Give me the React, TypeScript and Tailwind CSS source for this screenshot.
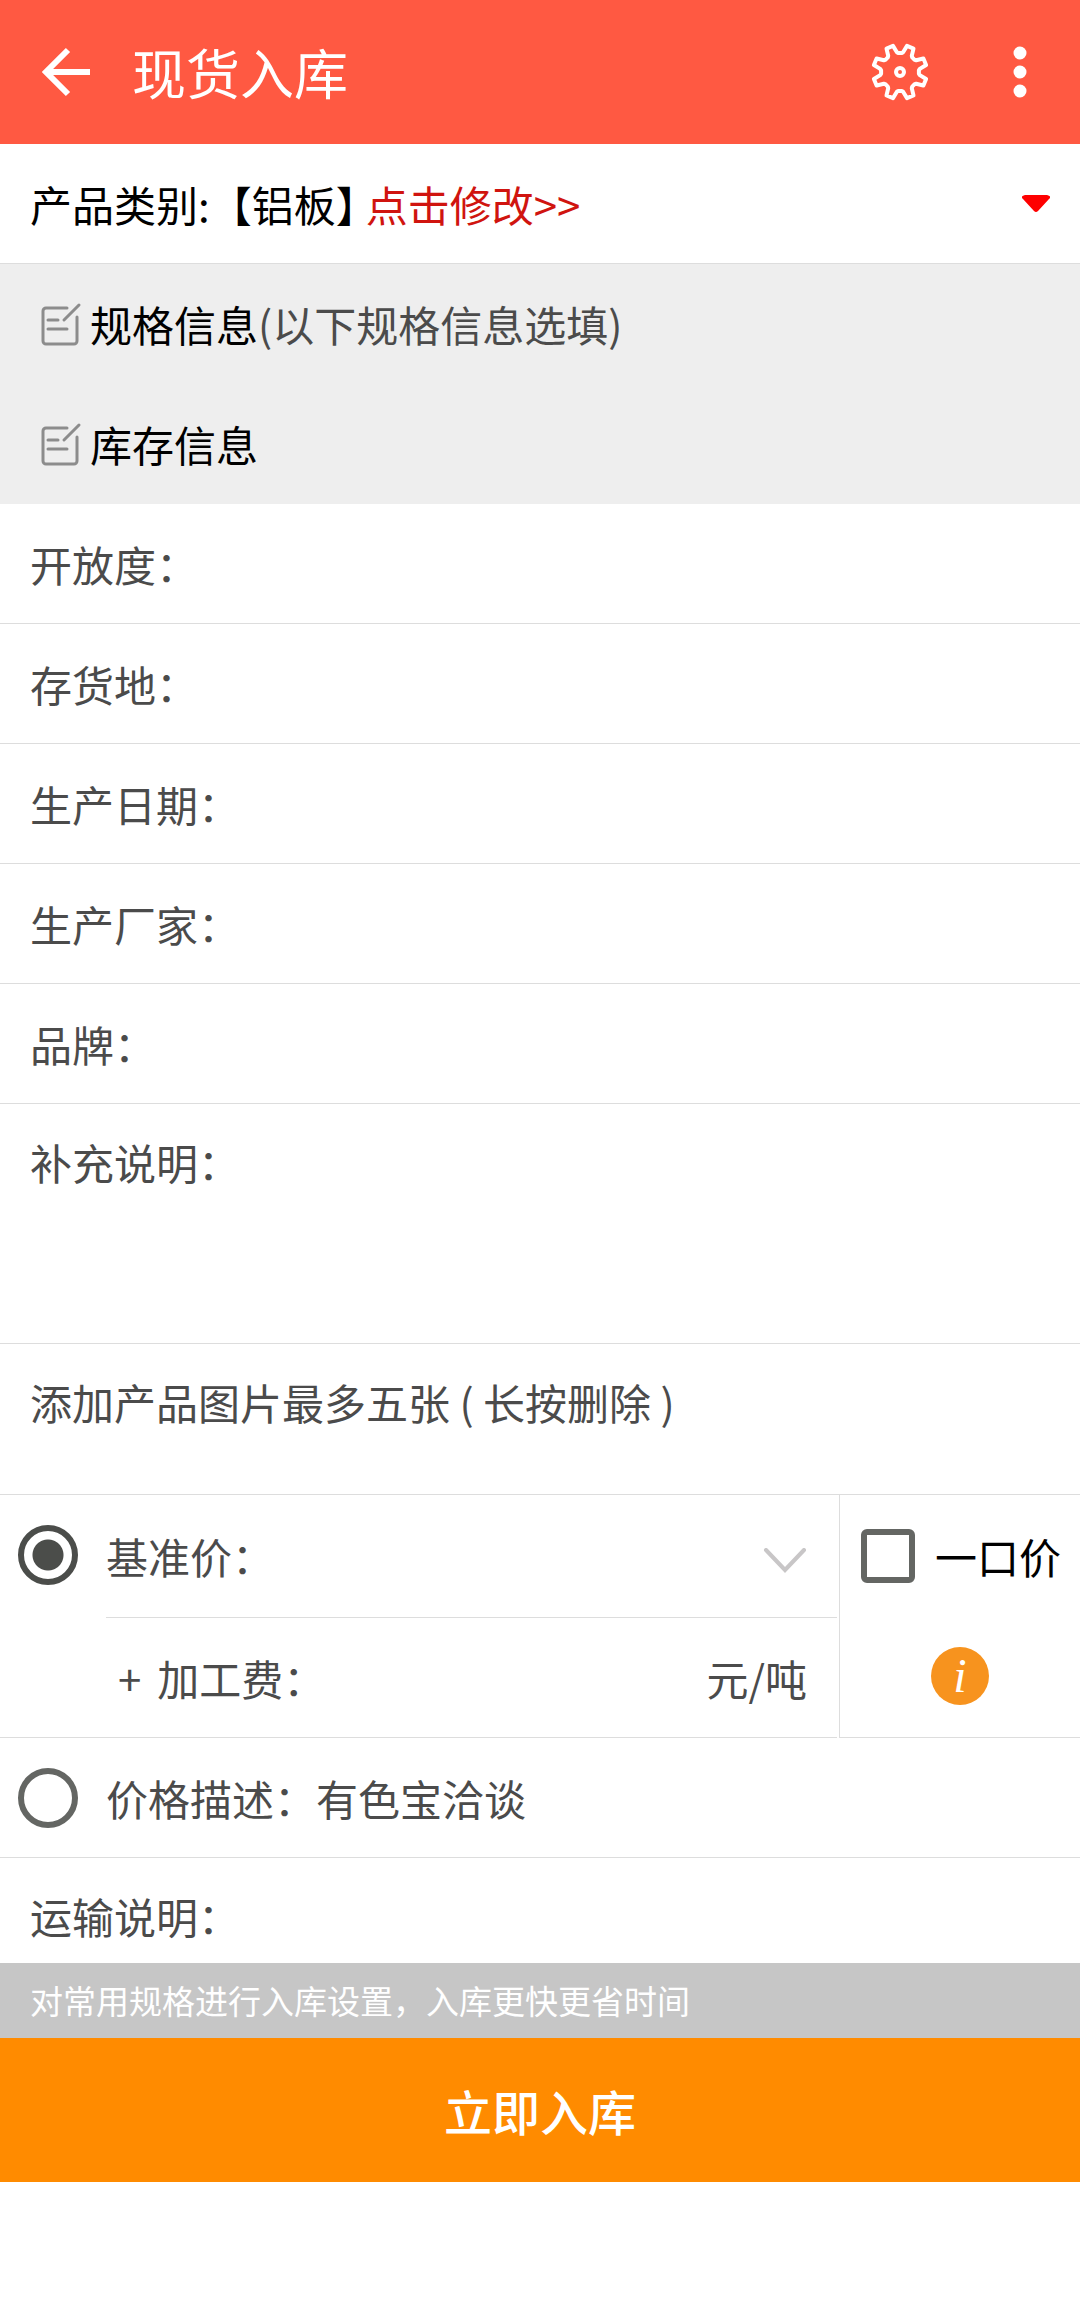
import { ReactNode, useState } from "react"

const fields = [
  { id: "openness", label: "开放度：" },
  { id: "location", label: "存货地：" },
  { id: "produceDate", label: "生产日期：" },
  { id: "manufacturer", label: "生产厂家：" },
  { id: "brand", label: "品牌：" },
]

// eight teeth, one every 45 degrees
const toothAngles = [0, 45, 90, 135, 180, 225, 270, 315]

const gearPath = () => {
  const points = toothAngles.flatMap(angle => {
    const tooth = [
      { r: 27, a: angle + 15 },
      { r: 27, a: angle + 30 },
      { r: 20, a: angle + 36 },
      { r: 19, a: angle + 40 },
      { r: 19, a: angle + 50 },
      { r: 20, a: angle + 54 },
    ]
    return tooth.map(({ r, a }) => {
      const rad = (a * Math.PI) / 180
      return `${(30 + r * Math.cos(rad)).toFixed(1)} ${(30 + r * Math.sin(rad)).toFixed(1)}`
    })
  })
  return `M${points.join("L")}Z`
}

const GearIcon = () => (
  <svg width="60" height="60" viewBox="0 0 60 60" fill="none" stroke="#fff" strokeWidth="4" strokeLinejoin="round">
    <path d={gearPath()} />
    <circle cx="30" cy="30" r="4" />
  </svg>
)

const EditIcon = () => (
  <svg width="42" height="44" viewBox="0 0 42 44" fill="none" stroke="#8c8c8c" strokeWidth="3" strokeLinecap="round">
    <path d="M27 6H6a3 3 0 0 0-3 3v30a3 3 0 0 0 3 3h28a3 3 0 0 0 3-3V15" />
    <path d="M24 18L39 3M8 18h10M8 27h19" />
  </svg>
)

const SectionTitle = ({ title, hint }: { title: string; hint?: string }) => (
  <div className="h-[120px] flex items-center gap-2 px-10">
    <EditIcon />
    <h2 className="text-black">
      {title}
      {hint && <span className="text-[#4b4b4b]">{hint}</span>}
    </h2>
  </div>
)

const Row = ({ id, label, children }: { id: string; label: string; children?: ReactNode }) => (
  <div className="h-[120px] flex items-center px-[30px] border-b border-[#dddddd]">
    <label htmlFor={id} className="shrink-0">{label}</label>
    {children ?? <input id={id} className="flex-1 min-w-0 outline-none" />}
  </div>
)

const radioStyle =
  "appearance-none shrink-0 size-[60px] rounded-full border-6 border-[#646663] checked:border-[#4b4d4a] checked:bg-[radial-gradient(circle,#4b4d4a_15px,transparent_16px)]"

const App = () => {
  const [priceType, setPriceType] = useState("base")
  const [description, setDescription] = useState("有色宝洽谈")

  return (
    <div className="min-h-screen bg-white text-[42px] leading-[60px] text-[#4b4b4b] font-['Noto_Sans_CJK_SC',sans-serif]">
      <header className="h-36 flex items-center bg-[#ff5942] text-white pl-9 pr-[30px]">
        <button aria-label="返回">
          <svg width="60" height="60" viewBox="0 0 60 60" fill="none" stroke="#fff" strokeWidth="6">
            <path d="M54 30H10M32 8L10 30l22 22" />
          </svg>
        </button>
        <h1 className="flex-1 pl-9 text-[54px] leading-[72px]">现货入库</h1>
        <button aria-label="设置" className="mr-15">
          <GearIcon />
        </button>
        <button aria-label="更多">
          <svg width="60" height="60" viewBox="0 0 60 60" fill="#fff">
            <circle cx="30" cy="11" r="6.5" />
            <circle cx="30" cy="30" r="6.5" />
            <circle cx="30" cy="49" r="6.5" />
          </svg>
        </button>
      </header>

      <main>
        <div className="h-[120px] flex items-center px-[30px] border-b border-[#dddddd] text-black">
          <span>产品类别:【铝板】</span>
          <a href="#category" className="-ml-3 text-[#d0140f]">点击修改&gt;&gt;</a>
          <svg className="ml-auto" width="28" height="18" viewBox="0 0 28 18" fill="#fe0000">
            <path d="M3 0h22q5 1 2 4L16 16q-2 2-4 0L1 4q-3-3 2-4z" />
          </svg>
        </div>

        <div className="bg-[#eeeeee]">
          <SectionTitle title="规格信息" hint="(以下规格信息选填)" />
          <SectionTitle title="库存信息" />
        </div>

        {fields.map(field => (
          <Row key={field.id} id={field.id} label={field.label} />
        ))}

        <div className="h-60 flex items-start px-[30px] py-7 border-b border-[#dddddd]">
          <label htmlFor="remark" className="shrink-0">补充说明：</label>
          <textarea id="remark" className="flex-1 h-full resize-none outline-none" />
        </div>

        <div className="h-[151px] px-[30px] pt-7 border-b border-[#dddddd]">添加产品图片最多五张 ( 长按删除 )</div>

        <div className="flex">
          <div className="flex-1 flex pl-[18px] border-b border-[#dddddd]">
            <input
              type="radio"
              id="basePrice"
              name="priceType"
              className={`${radioStyle} mt-[30px]`}
              checked={priceType === "base"}
              onChange={() => setPriceType("base")}
            />
            <div className="flex-1 ml-7">
              <div className="h-[123px] flex items-center justify-between pr-[30px] border-b border-[#dddddd]">
                <label htmlFor="basePrice">基准价：</label>
                <button aria-label="选择基准价" className="pt-2">
                  <svg width="44" height="25" viewBox="0 0 44 25" fill="none" stroke="#c8c6c7" strokeWidth="4" strokeLinecap="round">
                    <path d="M3 2l19 20L41 2" />
                  </svg>
                </button>
              </div>
              <div className="h-[119px] flex items-center pl-3 pr-[30px]">
                <label htmlFor="fee" className="shrink-0 flex gap-4">
                  <span>+</span>
                  <span>加工费：</span>
                </label>
                <input id="fee" className="flex-1 min-w-0 outline-none" />
                <span>元/吨</span>
              </div>
            </div>
          </div>
          <div className="w-[241px] ml-[2px] border-l border-b border-[#dddddd]">
            <div className="h-[121px] flex items-center pl-[21px] gap-5 text-black">
              <input
                type="checkbox"
                id="fixedPrice"
                className="appearance-none shrink-0 size-[54px] rounded-md border-6 border-[#646663] checked:bg-[#646663]"
              />
              <label htmlFor="fixedPrice" className="whitespace-nowrap">一口价</label>
            </div>
            <div className="h-[119px] flex items-center justify-center">
              <button
                aria-label="价格说明"
                className="size-[58px] rounded-full bg-[#f7931e] text-white text-5xl leading-[58px] italic font-['Liberation_Serif',serif]"
              >
                i
              </button>
            </div>
          </div>
        </div>

        <div className="h-[120px] flex items-center pl-[18px] pr-[30px] border-b border-[#dddddd]">
          <input
            type="radio"
            id="textPrice"
            name="priceType"
            className={radioStyle}
            checked={priceType === "text"}
            onChange={() => setPriceType("text")}
          />
          <label htmlFor="textPrice" className="shrink-0 ml-7">价格描述：</label>
          <input
            aria-label="价格描述"
            className="flex-1 min-w-0 outline-none"
            value={description}
            onChange={e => setDescription(e.target.value)}
          />
        </div>

        <div className="h-[105px] flex items-start px-[30px] pt-7">
          <label htmlFor="transport" className="shrink-0">运输说明：</label>
          <input id="transport" className="flex-1 min-w-0 outline-none" />
        </div>
      </main>

      <footer>
        <p className="px-[30px] py-3 bg-[#c6c6c6] text-white text-[33px] leading-[51px]">对常用规格进行入库设置，入库更快更省时间</p>
        <button className="w-full h-36 bg-[#ff8b00] text-white text-5xl font-medium">立即入库</button>
      </footer>
    </div>
  )
}

export default App
